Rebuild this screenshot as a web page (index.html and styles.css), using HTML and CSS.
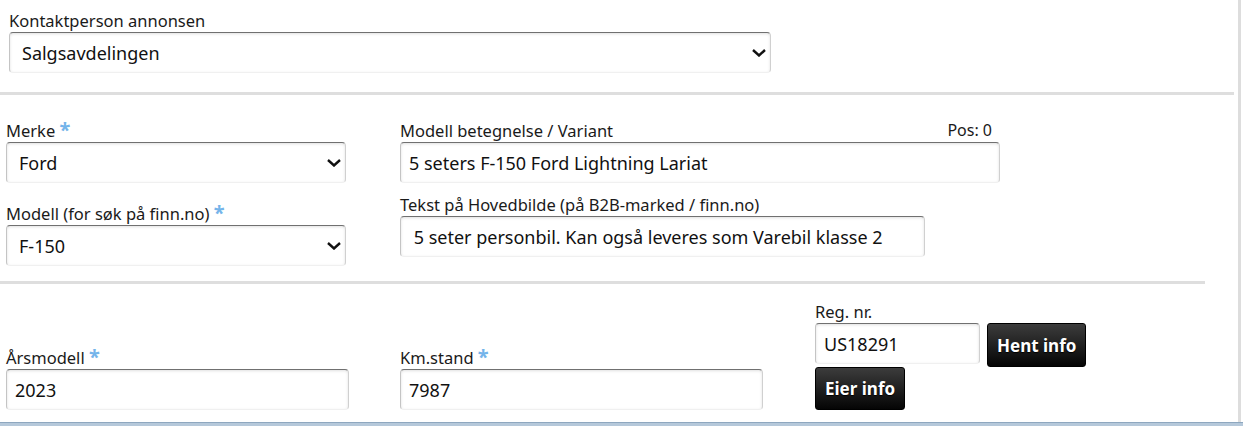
FILE: index.html
```html
<!DOCTYPE html>
<html lang="no">
<head>
    <meta charset="UTF-8">
    <meta name="viewport" content="width=device-width, initial-scale=1.0">
    <title>Annonse - kjøretøy</title>
    <link rel="stylesheet" href="styles.css">
</head>
<body>
    <div class="page">
        <div class="contact">
            <label class="label">Kontaktperson annonsen</label>
            <div class="select-wrap">
                <select class="select"><option>Salgsavdelingen</option></select>
                <svg class="chevron" viewBox="0 0 14 8"><path d="M1 1l6 5.5L13 1" fill="none" stroke="#111" stroke-width="2.4"/></svg>
            </div>
        </div>

        <hr class="divider">

        <div class="vehicle">
            <div class="col-left">
                <div class="field">
                    <label class="label">Merke <span class="req">*</span></label>
                    <div class="select-wrap">
                        <select class="select"><option>Ford</option></select>
                        <svg class="chevron" viewBox="0 0 14 8"><path d="M1 1l6 5.5L13 1" fill="none" stroke="#111" stroke-width="2.4"/></svg>
                    </div>
                </div>
                <div class="field">
                    <label class="label">Modell (for søk på finn.no) <span class="req">*</span></label>
                    <div class="select-wrap">
                        <select class="select"><option>F-150</option></select>
                        <svg class="chevron" viewBox="0 0 14 8"><path d="M1 1l6 5.5L13 1" fill="none" stroke="#111" stroke-width="2.4"/></svg>
                    </div>
                </div>
            </div>
            <div class="col-right">
                <div class="field">
                    <div class="label-line">
                        <label class="label">Modell betegnelse / Variant</label>
                        <span class="pos">Pos: 0</span>
                    </div>
                    <input class="input variant" type="text" value="5 seters F-150 Ford Lightning Lariat">
                </div>
                <div class="field">
                    <label class="label">Tekst på Hovedbilde (på B2B-marked / finn.no)</label>
                    <input class="input caption" type="text" value=" 5 seter personbil. Kan også leveres som Varebil klasse 2">
                </div>
            </div>
        </div>

        <hr class="divider short">

        <div class="basics">
            <div class="field year">
                <label class="label">Årsmodell <span class="req">*</span></label>
                <input class="input" type="text" value="2023">
            </div>
            <div class="field km">
                <label class="label">Km.stand <span class="req">*</span></label>
                <input class="input" type="text" value="7987">
            </div>
            <div class="field reg">
                <label class="label">Reg. nr.</label>
                <div class="reg-row">
                    <input class="input regnr" type="text" value="US18291">
                    <button class="btn">Hent info</button>
                    <button class="btn">Eier info</button>
                </div>
            </div>
        </div>
    </div>
    <div class="bottom-bar"></div>
</body>
</html>
```

FILE: styles.css
```css
body {
    margin: 0;
    font-family: "Noto Sans", sans-serif;
    color: #1a1a1a;
    background: #fff;
}
.page {
    width: 1238px;
    border-right: 3px solid #ddd;
    padding-top: 10px;
    padding-bottom: 12px;
}
.label {
    display: block;
    font-size: 16.5px;
    line-height: 21px;
    margin-bottom: 1px;
}
.req {
    color: #74b4ea;
    font-weight: bold;
    font-size: 20px;
    line-height: 10px;
}
.select-wrap {
    position: relative;
}
.select,
.input {
    display: block;
    box-sizing: border-box;
    height: 41px;
    margin: 0;
    font-family: "Noto Sans", sans-serif;
    font-size: 18px;
    color: #111;
    background: #fff;
    border: 1px solid;
    border-color: #707070 #d0d0d0 #f0f0f0 #c4c4c4;
    border-radius: 4px;
    box-shadow: inset 0 1px 3px rgba(0, 0, 0, 0.12);
    outline: none;
}
.select {
    width: 100%;
    padding: 0 30px 0 12px;
    appearance: none;
    -webkit-appearance: none;
}
.input {
    padding: 0 8px;
}
.chevron {
    position: absolute;
    right: 5px;
    top: 17px;
    width: 14px;
    height: 8px;
}
.contact {
    width: 762px;
    margin-left: 9px;
}
.divider {
    border: none;
    height: 3px;
    background: #dedede;
    margin: 19px 4px 0 0;
}
.divider.short {
    margin: 15px 33px 0 0;
}
.vehicle {
    display: flex;
    gap: 54px;
    padding: 25px 0 0 6px;
}
.col-left {
    width: 340px;
    display: flex;
    flex-direction: column;
    gap: 20px;
}
.col-right {
    display: flex;
    flex-direction: column;
    gap: 11px;
}
.label-line {
    display: flex;
    justify-content: space-between;
    width: 592px;
}
.pos {
    font-size: 16px;
    line-height: 21px;
}
.variant {
    width: 600px;
}
.caption {
    width: 525px;
}
.basics {
    display: flex;
    align-items: flex-end;
    padding: 17px 0 0 6px;
}
.year {
    width: 343px;
    margin-right: 51px;
}
.year .input {
    width: 343px;
}
.km {
    margin-right: 52px;
}
.km .input {
    width: 363px;
}
.reg-row {
    display: flex;
    flex-wrap: wrap;
    align-items: flex-start;
    width: 280px;
    column-gap: 7px;
}
.regnr {
    width: 165px;
}
.btn {
    height: 44px;
    padding: 0 9px;
    font-family: "Noto Sans", sans-serif;
    font-size: 17px;
    font-weight: bold;
    color: #fff;
    text-shadow: 0 1px 1px #000;
    background: linear-gradient(#3c3c3c, #050505);
    border: 1px solid #000;
    border-radius: 3px;
    cursor: pointer;
}
.reg-row .btn:last-child {
    height: 43px;
}
.bottom-bar {
    height: 4px;
    border-top: 1px solid #8ea7bf;
    background: #b5c8da;
}
```
